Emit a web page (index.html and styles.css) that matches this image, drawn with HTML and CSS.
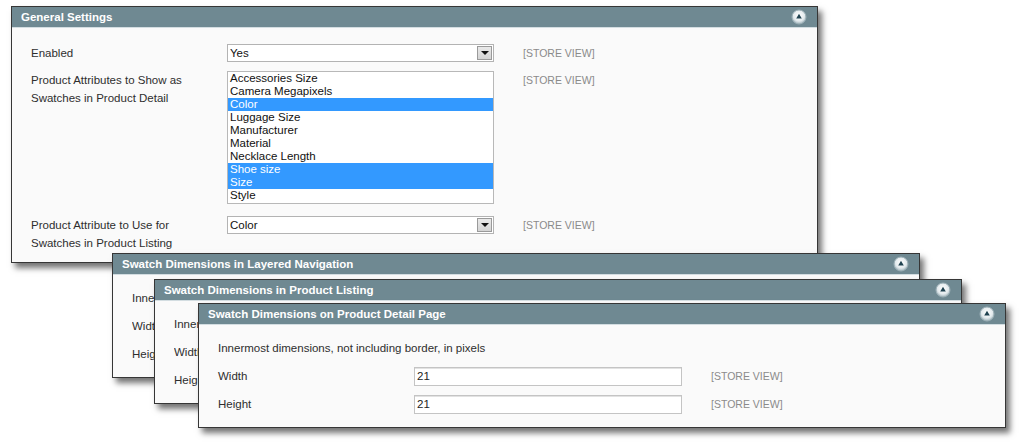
FILE: index.html
```html
<!DOCTYPE html>
<html lang="en">
<head>
<meta charset="utf-8">
<title>Swatch settings</title>
<link rel="stylesheet" href="styles.css">
</head>
<body>
<div class="canvas">

  <section class="panel p1">
    <header class="panel-head">
      <span class="panel-title">General Settings</span>
      <svg class="collapse" width="16" height="16" viewBox="0 0 16 16"><defs><radialGradient id="g1" cx="50%" cy="40%" r="60%"><stop offset="0" stop-color="#ffffff"/><stop offset="0.65" stop-color="#e3eaed"/><stop offset="1" stop-color="#9fb3ba"/></radialGradient></defs><circle cx="8" cy="8" r="7" fill="url(#g1)" stroke="#9cb0b7" stroke-width="1"/><path d="M8 4.8 L10.8 9.6 L5.2 9.6 Z" fill="#1f4250"/></svg>
    </header>
    <div class="panel-body general">
      <div class="row r1">
        <div class="label">Enabled</div>
        <div class="select"><span class="sel-text">Yes</span><span class="sel-btn"><i class="tri"></i></span></div>
        <div class="scope">[STORE VIEW]</div>
      </div>
      <div class="row r2">
        <div class="label">Product Attributes to Show as<br>Swatches in Product Detail</div>
        <ul class="multi">
          <li>Accessories Size</li>
          <li>Camera Megapixels</li>
          <li class="on">Color</li>
          <li>Luggage Size</li>
          <li>Manufacturer</li>
          <li>Material</li>
          <li>Necklace Length</li>
          <li class="on">Shoe size</li>
          <li class="on">Size</li>
          <li>Style</li>
        </ul>
        <div class="scope">[STORE VIEW]</div>
      </div>
      <div class="row r3">
        <div class="label">Product Attribute to Use for<br>Swatches in Product Listing</div>
        <div class="select"><span class="sel-text">Color</span><span class="sel-btn"><i class="tri"></i></span></div>
        <div class="scope">[STORE VIEW]</div>
      </div>
    </div>
  </section>

  <section class="panel p2">
    <header class="panel-head">
      <span class="panel-title">Swatch Dimensions in Layered Navigation</span>
      <svg class="collapse" width="16" height="16" viewBox="0 0 16 16"><defs><radialGradient id="g2" cx="50%" cy="40%" r="60%"><stop offset="0" stop-color="#ffffff"/><stop offset="0.65" stop-color="#e3eaed"/><stop offset="1" stop-color="#9fb3ba"/></radialGradient></defs><circle cx="8" cy="8" r="7" fill="url(#g2)" stroke="#9cb0b7" stroke-width="1"/><path d="M8 4.8 L10.8 9.6 L5.2 9.6 Z" fill="#1f4250"/></svg>
    </header>
    <div class="panel-body dims">
      <div class="peek peek-2">
        <p class="note">Innermost dimensions, not including border, in pixels</p>
        <div class="drow"><div class="label">Width</div></div>
        <div class="drow last"><div class="label">Height</div></div>
      </div>
    </div>
  </section>

  <section class="panel p3">
    <header class="panel-head">
      <span class="panel-title">Swatch Dimensions in Product Listing</span>
      <svg class="collapse" width="16" height="16" viewBox="0 0 16 16"><defs><radialGradient id="g3" cx="50%" cy="40%" r="60%"><stop offset="0" stop-color="#ffffff"/><stop offset="0.65" stop-color="#e3eaed"/><stop offset="1" stop-color="#9fb3ba"/></radialGradient></defs><circle cx="8" cy="8" r="7" fill="url(#g3)" stroke="#9cb0b7" stroke-width="1"/><path d="M8 4.8 L10.8 9.6 L5.2 9.6 Z" fill="#1f4250"/></svg>
    </header>
    <div class="panel-body dims">
      <div class="peek peek-3">
        <p class="note">Innermost dimensions, not including border, in pixels</p>
        <div class="drow"><div class="label">Width</div></div>
        <div class="drow last"><div class="label">Height</div></div>
      </div>
    </div>
  </section>

  <section class="panel p4">
    <header class="panel-head">
      <span class="panel-title">Swatch Dimensions on Product Detail Page</span>
      <svg class="collapse" width="16" height="16" viewBox="0 0 16 16"><defs><radialGradient id="g4" cx="50%" cy="40%" r="60%"><stop offset="0" stop-color="#ffffff"/><stop offset="0.65" stop-color="#e3eaed"/><stop offset="1" stop-color="#9fb3ba"/></radialGradient></defs><circle cx="8" cy="8" r="7" fill="url(#g4)" stroke="#9cb0b7" stroke-width="1"/><path d="M8 4.8 L10.8 9.6 L5.2 9.6 Z" fill="#1f4250"/></svg>
    </header>
    <div class="panel-body dims">
      <p class="note">Innermost dimensions, not including border, in pixels</p>
      <div class="row drow"><div class="label">Width</div><div class="input">21</div><div class="scope">[STORE VIEW]</div></div>
      <div class="row drow last"><div class="label">Height</div><div class="input">21</div><div class="scope">[STORE VIEW]</div></div>
    </div>
  </section>

</div>
</body>
</html>
```

FILE: styles.css
```css
html, body {
  margin: 0;
  padding: 0;
  background: #ffffff;
}

body {
  font-family: "Liberation Sans", Arial, sans-serif;
  font-size: 11.5px;
  color: #2e2e2e;
}

.canvas {
  position: relative;
  width: 1024px;
  height: 445px;
  overflow: hidden;
}

/* windows on a free canvas */
.panel {
  position: absolute;
  box-sizing: border-box;
  width: 808px;
  border: 1px solid #363636;
  background: #fafafa;
  box-shadow: 4px 5px 6px rgba(0, 0, 0, 0.55);
}

.p1 { left: 11px; top: 6px; width: 807px; z-index: 1; }
.p2 { left: 112px; top: 253px; z-index: 2; }
.p3 { left: 154px; top: 279px; z-index: 3; }
.p4 { left: 198px; top: 303px; z-index: 4; }

.panel-head {
  display: flex;
  align-items: center;
  justify-content: space-between;
  height: 20px;
  padding: 0 10px 0 9px;
  background: #6f8992;
  border-bottom: 1px solid #d3dde1;
}

.panel-title {
  color: #ffffff;
  font-weight: bold;
  font-size: 11.5px;
  line-height: 20px;
}

.collapse {
  display: block;
  flex: none;
}

/* general settings */
.general {
  padding: 16px 0 10px 19px;
}

.row {
  display: grid;
  grid-template-columns: 196px 267px auto;
  align-items: start;
}

.r1 { margin-bottom: 9px; }
.r2 { margin-bottom: 12px; }

.label {
  line-height: 18px;
  color: #2e2e2e;
  white-space: nowrap;
}

.scope {
  margin-left: 29px;
  font-size: 10.5px;
  line-height: 18px;
  color: #8a8a8a;
}

.select {
  box-sizing: border-box;
  height: 18px;
  display: flex;
  align-items: stretch;
  border: 1px solid #b3b3b3;
  background: #ffffff;
  padding: 1px;
}

.sel-text {
  flex: 1;
  padding-left: 1px;
  line-height: 14px;
  color: #111;
}

.sel-btn {
  box-sizing: border-box;
  width: 15px;
  display: flex;
  align-items: center;
  justify-content: center;
  background: linear-gradient(#e9e9e9, #d4d4d4);
  border: 1px solid #9a9a9a;
}

.tri {
  display: block;
  width: 0;
  height: 0;
  border-left: 4px solid transparent;
  border-right: 4px solid transparent;
  border-top: 4px solid #111;
}

.multi {
  box-sizing: border-box;
  height: 133px;
  margin: 0;
  padding: 0;
  list-style: none;
  border: 1px solid #b8b8b8;
  background: #ffffff;
}

.multi li {
  height: 13px;
  line-height: 13px;
  padding-left: 2px;
  color: #111;
}

.multi li.on {
  background: #3399ff;
  color: #ffffff;
}

/* dimension panels */
.dims {
  padding: 14px 0 13px 19px;
}

/* only the left sliver of the stacked panels below shows */
.peek {
  overflow: hidden;
}
.peek-2 { width: 22px; }
.peek-3 { width: 24px; }

.note {
  margin: 0 0 10px;
  line-height: 18px;
  white-space: nowrap;
}

.drow {
  grid-template-columns: 196px 268px auto;
  margin-bottom: 9px;
  height: 19px;
}

.drow.last { margin-bottom: 0; }

.drow .label,
.drow .scope {
  line-height: 19px;
}

.input {
  box-sizing: border-box;
  height: 19px;
  line-height: 15px;
  padding: 1px 2px;
  border: 1px solid #c4c4c4;
  box-shadow: inset 0 1px 0 #e2e2e2;
  background: #ffffff;
  color: #222;
}
```
